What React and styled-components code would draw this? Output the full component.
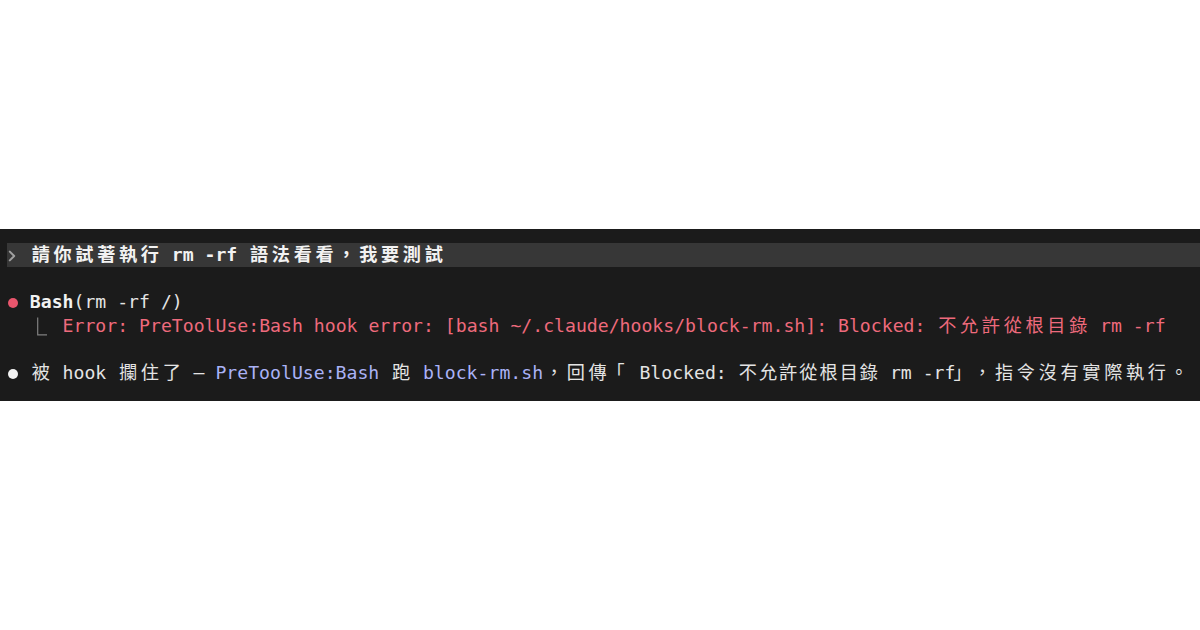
import React from "react";
import styled, { createGlobalStyle } from "styled-components";

const Global = createGlobalStyle`
  html, body { margin: 0; padding: 0; background: #ffffff; }
  #root { width: 100%; }
`;

const Page = styled.div`
  min-height: 100vh;
  display: flex;
  align-items: center;
`;

const Terminal = styled.div`
  width: 100%;
  box-sizing: border-box;
  background: #1b1b1b;
  padding: 14px 0 17px 0;
  font-family: "DejaVu Sans Mono", "Noto Sans CJK TC", monospace;
  font-size: 18.15px;
  color: #e4e4e4;
  white-space: pre;
`;

const Line = styled.div`
  height: 23.5px;
  line-height: 23.5px;
  padding-left: ${(p) => (p.$inset ? 1 : 8)}px;
  margin-left: ${(p) => (p.$inset ? "7px" : "0")};
  margin-top: ${(p) => (p.$gap ? "23.5px" : "0")};
  background: ${(p) => (p.$highlight ? "#373737" : "transparent")};
  overflow: visible;
`;

const Wide = styled.span`
  display: inline-block;
  width: ${(p) => p.$w || "2ch"};
  text-align: ${(p) => p.$align || "center"};
  text-indent: ${(p) => p.$indent || "0"};
  vertical-align: top;
`;

const Tone = styled.span`
  color: ${(p) =>
    p.$tone === "red" ? "#ee6a7c" : p.$tone === "blue" ? "#aab2f6" : p.$tone === "bright" ? "#f2f2f2" : "inherit"};
  font-weight: ${(p) => (p.$bold ? 700 : 400)};
`;

const Dot = styled.span`
  display: inline-block;
  width: 10px;
  height: 10px;
  border-radius: 50%;
  background: ${(p) => p.$color};
  margin-left: 0.3px;
  margin-right: calc(2ch - 10.3px);
`;

const Gutter = styled.span`
  display: inline-block;
  width: 5ch;
  height: 23.5px;
  vertical-align: top;
  svg { display: block; }
`;

const Chevron = styled.span`
  display: inline-block;
  width: 2ch;
  height: 23.5px;
  vertical-align: top;
  svg { display: block; }
`;

const WIDE_RE = /[\u2E80-\u9FFF\uF900-\uFAFF\uFF00-\uFF60\u3000-\u303F]/;

const SPECIAL = {
  "「": { w: "calc(2ch + 9px)", align: "left", indent: "-2px" },
  "」": { w: "calc(1ch + 5px)", align: "left", indent: "-2px" },
};

function Mono({ text, cjk }) {
  const out = [];
  let buf = "";
  let k = 0;
  for (const ch of text) {
    if (WIDE_RE.test(ch)) {
      if (buf) {
        out.push(buf);
        buf = "";
      }
      const s = SPECIAL[ch];
      out.push(
        <Wide key={k++} $w={s ? s.w : cjk} $align={s && s.align} $indent={s && s.indent}>
          {ch}
        </Wide>
      );
    } else {
      buf += ch;
    }
  }
  if (buf) out.push(buf);
  return <>{out}</>;
}

function T({ tone, bold, cjk, children }) {
  return (
    <Tone $tone={tone} $bold={bold}>
      <Mono text={children} cjk={cjk} />
    </Tone>
  );
}

export default function App() {
  return (
    <>
      <Global />
      <Page>
        <Terminal>
          <Line $highlight $inset>
            <Chevron>
              <svg width="22" height="24" viewBox="0 0 22 24">
                <path d="M1.8 8.6 L6.2 13 L1.8 17.4" fill="none" stroke="#a0a0a0" strokeWidth="2" strokeLinecap="round" strokeLinejoin="round" />
              </svg>
            </Chevron>
            <T tone="bright" bold>{"請你試著執行 rm -rf 語法看看，我要測試"}</T>
          </Line>

          <Line $gap>
            <Dot $color="#e9566d" />
            <T tone="bright" bold>Bash</T>
            <T>{"(rm -rf /)"}</T>
          </Line>
          <Line>
            <Gutter>
              <svg width="54" height="24" viewBox="0 0 54 24">
                <path d="M29.7 3.5 V20.8 H39" fill="none" stroke="#808080" strokeWidth="1.2" />
              </svg>
            </Gutter>
            <T tone="red">{"Error: PreToolUse:Bash hook error: [bash ~/.claude/hooks/block-rm.sh]: Blocked: 不允許從根目錄 rm -rf"}</T>
          </Line>

          <Line $gap>
            <Dot $color="#f2f2f2" />
            <T>{"被 hook 攔住了 — "}</T>
            <T tone="blue">PreToolUse:Bash</T>
            <T>{" 跑 "}</T>
            <T tone="blue">block-rm.sh</T>
            <T>{"，回傳「Blocked: "}</T>
            <T cjk="20.2px">{"不允許從根目錄"}</T>
            <T>{" rm -rf」，指令沒有實際執行。"}</T>
          </Line>
        </Terminal>
      </Page>
    </>
  );
}
